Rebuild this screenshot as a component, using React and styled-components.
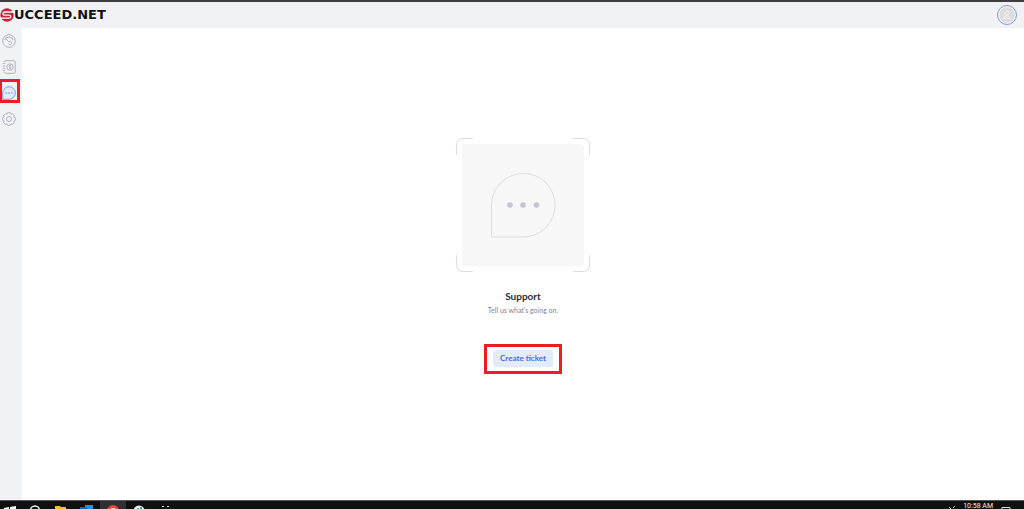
import React from 'react'
import styled, { createGlobalStyle } from 'styled-components';

const GlobalStyle = createGlobalStyle`
    * {
        box-sizing: border-box;
    }
    body {
        margin: 0;
        background: #fff;
        font-family: Lato, "Liberation Sans", sans-serif;
    }
    button {
        font-family: inherit;
    }
`;

const Page = styled.div`
    display: flex;
    flex-direction: column;
    min-height: 100vh;
`;

const Header = styled.header`
    display: flex;
    align-items: center;
    justify-content: space-between;
    height: 28px;
    padding-right: 7px;
    border-top: 2px solid #3f3d42;
    background: #f1f2f5;
`;

const Logo = styled.a`
    display: flex;
    align-items: center;
    color: #121212;
    font: bold 13px/14px "DejaVu Sans", sans-serif;
    text-decoration: none;
`;

const Avatar = styled.button`
    display: flex;
    width: 20px;
    height: 20px;
    padding: 1px;
    border: 1px solid #7e9bea;
    border-radius: 50%;
    background: #f1f2f5;
`;

const Body = styled.div`
    display: flex;
    flex: 1;
`;

const Sidebar = styled.nav`
    display: flex;
    flex-direction: column;
    gap: 2px;
    width: 22px;
    padding-top: 1px;
    background: #f1f2f5;
`;

const NavLink = styled.a`
    position: relative;
    display: flex;
    align-items: center;
    justify-content: center;
    width: 18px;
    height: 24px;
    color: ${({ $active }) => ($active ? '#6f8df5' : '#a9abb8')};
`;

const NavMarker = styled.span`
    position: absolute;
    top: -2px;
    left: -1px;
    width: 21px;
    height: 24px;
    border: 3px solid #ee1c25;
`;

const Main = styled.main`
    display: flex;
    flex: 1;
    flex-direction: column;
    align-items: center;
    justify-content: center;
    padding-bottom: 16px;
`;

const Title = styled.h1`
    margin: 16px 0 0;
    color: #2b2a35;
    font-size: 10px;
    font-weight: 700;
    line-height: 16px;
`;

const Text = styled.p`
    margin: 0 0 28px;
    color: #858391;
    font-size: 7px;
    line-height: 12px;
`;

const Marker = styled.div`
    padding: 3px 6px 4px;
    border: 3px solid #ee1c25;
`;

const Button = styled.button`
    display: block;
    width: 60px;
    height: 17px;
    padding: 0 0 1px;
    border: 0;
    border-radius: 3px;
    background: #e3ecff;
    color: #4b68f5;
    font-size: 8px;
    font-weight: 700;
    line-height: 16px;
`;

const Taskbar = styled.footer`
    display: flex;
    justify-content: space-between;
    height: 9px;
    overflow: hidden;
    border-top: 1px solid #56565a;
    background: #101010;
`;

const Apps = styled.div`
    display: flex;
`;

const TaskbarButton = styled.button`
    display: flex;
    justify-content: center;
    width: ${({ $narrow }) => ($narrow ? '22px' : '26px')};
    height: 24px;
    padding: 4px 0 0;
    border: 0;
    background: ${({ $active }) => ($active ? '#303032' : 'transparent')};
`;

const Tray = styled.div`
    display: flex;
    gap: 8px;
    padding-right: 13px;
    color: #f2f2f2;
`;

const Clock = styled.time`
    padding-top: 1px;
    font: 7px/8px Roboto, sans-serif;
`;

const icon = { fill: 'none', stroke: 'currentColor' };

const LogoMark = () => (
    <svg width="14" height="14" viewBox="0 0 14 14" aria-hidden="true">
        <circle cx="7" cy="7" r="6.7" fill="#c3243c" />
        <path d="M14 4H5.2Q3 4 3 5.7T5.2 7.2H9Q10.7 7.2 10.7 8.7T9 10.2H0" fill="none" stroke="#fff" strokeWidth="1.3" />
    </svg>
);

const GaugeIcon = () => (
    <svg width="14" height="14" viewBox="0 0 14 14" {...icon} strokeWidth=".9">
        <circle cx="7" cy="7" r="6.3" />
        <path d="M3.2 6.2Q2.6 4.9 3.6 4.2Q7 1.6 10.4 4.2Q11.4 4.9 10.6 6.2" />
        <path d="M4 4.8 7 8.200" />
        <path d="M7 7.400A1.700 1.700 0 1 1 6.200 9.500" />
    </svg>
);

const BillingIcon = () => (
    <svg width="14" height="14" viewBox="0 0 14 14" {...icon} strokeWidth=".9">
        <path d="M2.2 2V1.8Q2.2.7 3.3.7H12Q13.2.7 13.2 1.8V12.2Q13.2 13.3 12 13.3H3.3Q2.2 13.3 2.2 12.2V12" />
        <path d="M.8 3.4H3.2M.8 5.8H3.2M.8 8.2H3.2M.8 10.6H3.2" />
        <circle cx="8" cy="7" r="3.2" />
        <path d="M9.1 5.8Q8 5.1 7.2 5.8T8 7T8.9 8.2T7 8.2M8 4.8V9.2" strokeWidth=".7" />
    </svg>
);

const ChatIcon = () => (
    <svg width="14" height="14" viewBox="0 0 14 14" {...icon} strokeWidth=".9">
        <path d="M.7 13.3V7A6.3 6.3 0 1 1 7 13.3Z" fill="#e3ebff" />
        <g fill="currentColor" stroke="none">
            <circle cx="4.2" cy="7" r=".8" />
            <circle cx="7" cy="7" r=".8" />
            <circle cx="9.8" cy="7" r=".8" />
        </g>
    </svg>
);

const SettingsIcon = () => (
    <svg width="14" height="14" viewBox="0 0 14 14" {...icon} strokeWidth=".9" strokeLinejoin="round">
        <path d="M5.6.7H8.4L9 2.2 10.6 1.7 12.4 3.5 11.8 5 13.3 5.7V8.3L11.8 9 12.4 10.6 10.6 12.4 9 11.8 8.4 13.3H5.6L5 11.8 3.4 12.4 1.6 10.6 2.2 9 .7 8.3V5.7L2.2 5 1.6 3.5 3.4 1.7 5 2.2Z" />
        <circle cx="7" cy="7" r="2.5" />
    </svg>
);

const Illustration = () => (
    <svg width="134" height="134" viewBox="0 0 134 134" fill="none" stroke="#dddde3" aria-hidden="true">
        <path d="M.5 17V7Q.5.5 7 .5H17M117 .5H127Q133.5.5 133.5 7V17M133.5 117V127Q133.5 133.5 127 133.5H117M17 133.5H7Q.5 133.5.5 127V117" />
        <rect x="6" y="6" width="122" height="122" rx="4" fill="#f7f7f7" stroke="none" />
        <path d="M35.5 99V67A31.8 31.8 0 1 1 67.5 99Z" />
        <g fill="#c5c4d1" stroke="none">
            <circle cx="54" cy="67" r="2.8" />
            <circle cx="67" cy="67" r="2.8" />
            <circle cx="80.5" cy="67" r="2.8" />
        </g>
    </svg>
);

const navItems = [
    { label: 'Dashboard', Icon: GaugeIcon },
    { label: 'Billing', Icon: BillingIcon },
    { label: 'Support', Icon: ChatIcon, active: true },
    { label: 'Settings', Icon: SettingsIcon },
];

const taskbarApps = [
    { label: 'Start', narrow: true, art: <path d="M0 3 5 2V7H0ZM6 2 12 1V7H6ZM0 8H5V12L0 11ZM6 8H12V13L6 12Z" fill="#fff" /> },
    { label: 'Search', art: <circle cx="7" cy="5.5" r="4.5" fill="none" stroke="#fff" strokeWidth="1.3" /> },
    { label: 'Files', art: <path d="M1 1H6L7 2H12V12H1Z" fill="#f5bd35" /> },
    { label: 'Mail', art: <><path d="M5 0H13V10H5Z" fill="#2492e0" /><path d="M0 2H7V10H0Z" fill="#0f69bd" /></> },
    { label: 'Browser', active: true, art: <><circle cx="7" cy="6" r="6" fill="#e2493b" /><circle cx="7" cy="6" r="3" fill="#fff" /><circle cx="7" cy="6" r="2.3" fill="#4285f4" /></> },
    { label: 'Chat', art: <><circle cx="7" cy="6" r="5.5" fill="#eef3f3" /><path d="M5 3H7V8H5Z" fill="#3fb1c6" /><path d="M8 2H10V5H8Z" fill="#36a67b" /></> },
    { label: 'More', art: <path d="M4 1H6V2H4ZM9 1H11V2H9ZM4 4H5V8H4ZM10 4H11V8H10Z" fill="#ddd" /> },
];

export default function App() {
    return (
        <Page>
            <GlobalStyle />
            <Header>
                <Logo href="#">
                    <LogoMark />
                    UCCEED.NET
                </Logo>
                <Avatar aria-label="Account">
                    <svg width="16" height="16" viewBox="0 0 16 16">
                        <circle cx="8" cy="8" r="7.7" fill="#dcdcdc" />
                        <g fill="none" stroke="#efefef">
                            <circle cx="8" cy="6" r="2" />
                            <path d="M4.5 11.5Q4.5 8.7 8 8.7T11.5 11.5Z" />
                        </g>
                    </svg>
                </Avatar>
            </Header>
            <Body>
                <Sidebar>
                    {navItems.map(({ label, Icon, active }) => (
                        <NavLink key={label} href="#" aria-label={label} $active={active}>
                            <Icon />
                            {active ? <NavMarker /> : null}
                        </NavLink>
                    ))}
                </Sidebar>
                <Main>
                    <Illustration />
                    <Title>Support</Title>
                    <Text>Tell us what's going on.</Text>
                    <Marker>
                        <Button>Create ticket</Button>
                    </Marker>
                </Main>
            </Body>
            <Taskbar>
                <Apps>
                    {taskbarApps.map(({ label, art, active, narrow }) => (
                        <TaskbarButton key={label} aria-label={label} $active={active} $narrow={narrow}>
                            <svg width="14" height="14" viewBox="0 0 14 14">{art}</svg>
                        </TaskbarButton>
                    ))}
                </Apps>
                <Tray>
                    <svg width="6" height="8" viewBox="0 0 6 8" fill="none" stroke="#ccc">
                        <path d="M0 6 2 8M4 7 6 5" />
                    </svg>
                    <Clock>10:58 AM</Clock>
                    <svg width="10" height="8" viewBox="0 0 10 8" fill="none" stroke="#ddd">
                        <path d="M1 8V6.5H9V8" />
                    </svg>
                </Tray>
            </Taskbar>
        </Page>
    )
}
